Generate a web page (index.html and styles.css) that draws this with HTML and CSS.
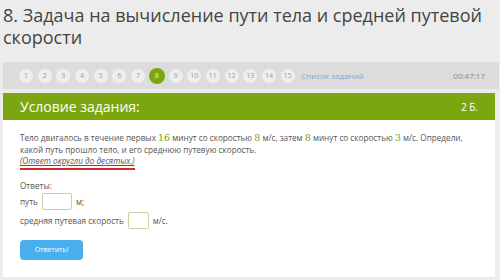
FILE: index.html
```html
<!DOCTYPE html>
<html>
  <head>
    <title>Задача 8</title>
    <link rel="stylesheet" href="styles.css">
  </head>
  <body>
    <h1 class="title">8. Задача на вычисление пути тела и средней путевой скорости</h1>

    <div class="nav">
      <div class="pages">
        <span class="page">1</span>
        <span class="page">2</span>
        <span class="page">3</span>
        <span class="page">4</span>
        <span class="page">5</span>
        <span class="page">6</span>
        <span class="page">7</span>
        <span class="page current">8</span>
        <span class="page link">9</span>
        <span class="page">10</span>
        <span class="page">11</span>
        <span class="page">12</span>
        <span class="page">13</span>
        <span class="page link">14</span>
        <span class="page link">15</span>
        <span class="list-link">Список заданий</span>
      </div>
      <span class="timer">00:47:17</span>
    </div>

    <div class="task">
      <div class="task-header">
        <span>Условие задания:</span>
        <span class="points">2 Б.</span>
      </div>
      <div class="task-body">
        <p class="condition">
          Тело двигалось в течение первых <span class="num">16</span> минут со скоростью
          <span class="num">8</span> м/с, затем <span class="num">8</span> минут со скоростью
          <span class="num">3</span> м/с. Определи,<br>
          какой путь прошло тело, и его среднюю путевую скорость.<br>
          <span class="hint">(Ответ округли до десятых.)</span>
        </p>

        <div class="answers">
          <div>Ответы:</div>
          <div class="answer-row">путь <span class="field"></span> м;</div>
          <div class="answer-row">средняя путевая скорость <span class="field small"></span> м/с.</div>
        </div>

        <button class="submit">Ответить!</button>
      </div>
    </div>
  </body>
</html>
```

FILE: styles.css
```css
:root {
  --green: #7ba60f;
  --bg-color: #ececec;
  --nav-bg: #dcdcdc;
  --text: #555;
}

body {
  margin: 0;
  padding: 0 3px;
  background-color: var(--bg-color);
  font-family: "Open Sans", "Noto Sans", sans-serif;
  color: var(--text);
}

.title {
  margin: 0;
  padding-top: 4px;
  font-size: 18px;
  font-weight: normal;
  line-height: 22px;
  color: #444;
  height: 58px;
}

.nav {
  display: flex;
  align-items: center;
  justify-content: space-between;
  background-color: var(--nav-bg);
  height: 27px;
  padding: 0 14px 0 16px;
  margin-right: -2px;
}

.pages {
  display: flex;
  align-items: center;
  gap: 4.7px;
}

.page {
  width: 14px;
  height: 14px;
  border-radius: 50%;
  background-color: #eeeeee;
  color: #9a9a9a;
  font-size: 7px;
  display: flex;
  align-items: center;
  justify-content: center;
}

.page.link {
  color: #7fa6d6;
}

.page.current {
  width: 16px;
  height: 16px;
  margin: 0 -1px;
  background-color: var(--green);
  color: #e6f0c8;
}

.list-link {
  margin-left: 2px;
  font-size: 8px;
  color: #7fa6d6;
}

.timer {
  font-size: 8px;
  color: #888;
}

.task {
  margin-top: 4px;
  margin-right: 2px;
  background: white;
}

.task-header {
  display: flex;
  justify-content: space-between;
  align-items: center;
  background-color: var(--green);
  color: white;
  height: 27px;
  padding: 0 17px;
  font-size: 14px;
}

.points {
  font-size: 10px;
}

.task-body {
  padding: 12px 17px 17px;
  font-size: 8.2px;
}

.condition {
  margin: 0;
  line-height: 11.5px;
}

.num {
  font-family: "DejaVu Serif", "Liberation Serif", serif;
  color: #7c9a16;
  font-size: 9.5px;
  line-height: 1;
}

.hint {
  font-style: italic;
  text-decoration: underline;
  border-bottom: 2px solid #d8282c;
  padding-bottom: 2px;
}

.answers {
  margin-top: 13px;
  line-height: 11px;
}

.answer-row {
  display: flex;
  align-items: center;
  gap: 4px;
  margin-top: 2px;
}

.field {
  width: 28px;
  height: 15px;
  border: 1px solid #c9d1a4;
  border-radius: 2px;
  background: white;
}

.field.small {
  width: 19px;
}

.submit {
  margin-top: 11px;
  width: 63px;
  height: 20px;
  border: none;
  border-radius: 4px;
  background-color: #4aaeee;
  color: white;
  font-family: "Open Sans", sans-serif;
  font-size: 7px;
}
```
